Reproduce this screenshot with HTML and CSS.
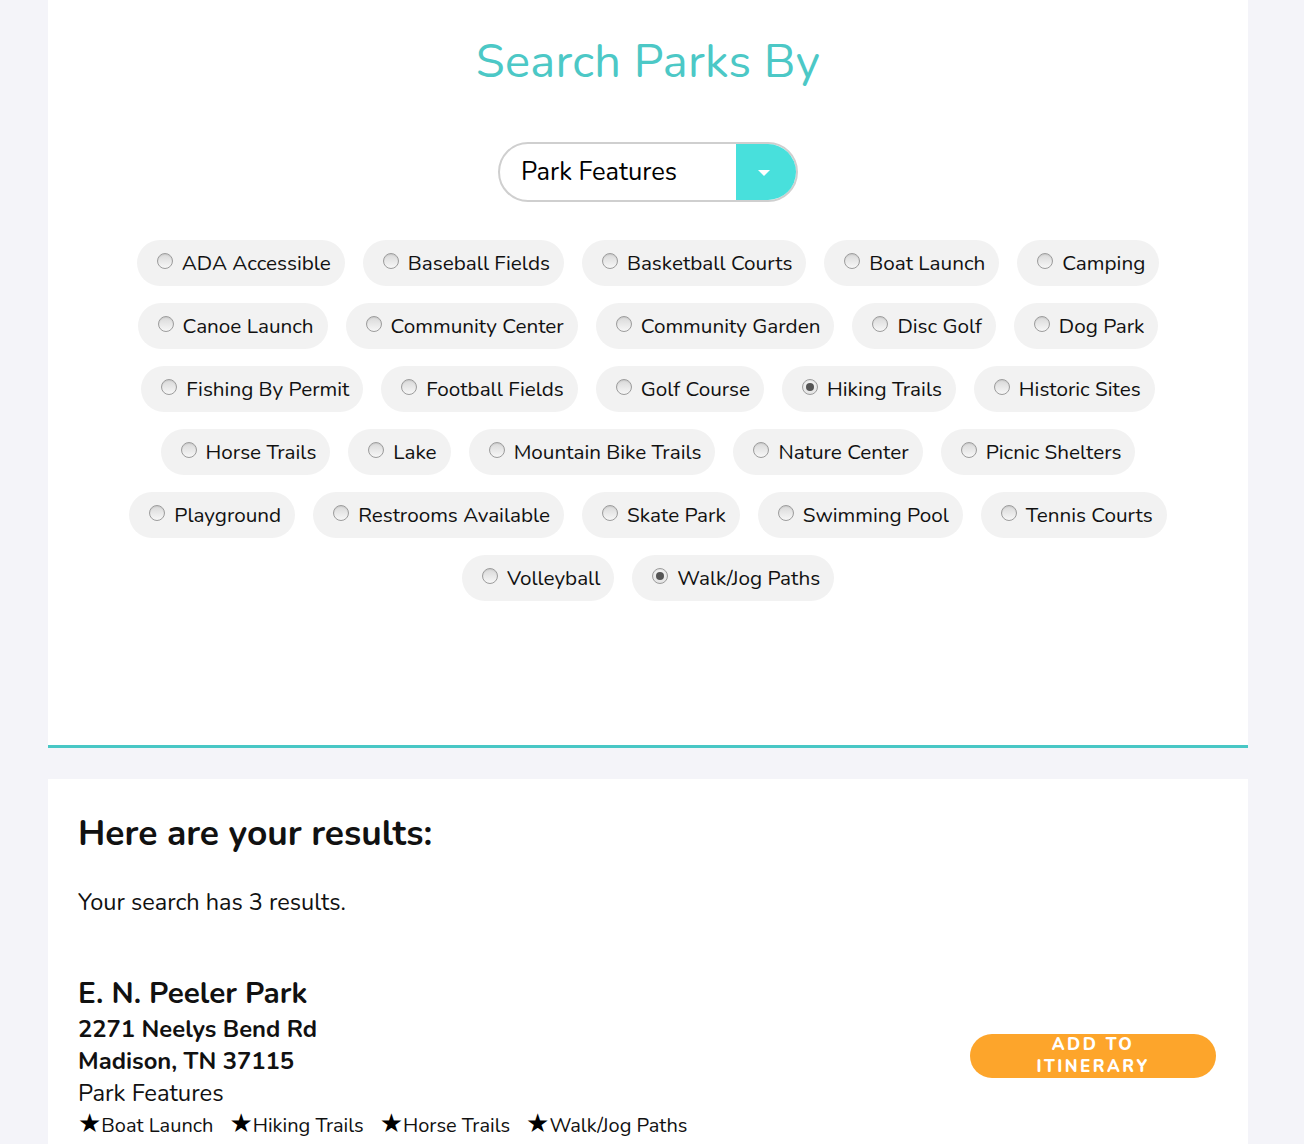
FILE: index.html
```html
<!DOCTYPE html>
<html>
<head>
<meta charset="utf-8">
<link rel="stylesheet" href="styles.css">
</head>
<body>
<div class="page">
  <section class="search">
    <h1 class="title">Search Parks By</h1>
    <div class="select">
      <span class="select-label">Park Features</span>
      <span class="select-btn"><span class="caret"></span></span>
    </div>
    <div class="pills">
      <div class="row">
        <label class="pill"><span class="radio"></span>ADA Accessible</label>
        <label class="pill"><span class="radio"></span>Baseball Fields</label>
        <label class="pill"><span class="radio"></span>Basketball Courts</label>
        <label class="pill"><span class="radio"></span>Boat Launch</label>
        <label class="pill"><span class="radio"></span>Camping</label>
      </div>
      <div class="row">
        <label class="pill"><span class="radio"></span>Canoe Launch</label>
        <label class="pill"><span class="radio"></span>Community Center</label>
        <label class="pill"><span class="radio"></span>Community Garden</label>
        <label class="pill"><span class="radio"></span>Disc Golf</label>
        <label class="pill"><span class="radio"></span>Dog Park</label>
      </div>
      <div class="row">
        <label class="pill"><span class="radio"></span>Fishing By Permit</label>
        <label class="pill"><span class="radio"></span>Football Fields</label>
        <label class="pill"><span class="radio"></span>Golf Course</label>
        <label class="pill"><span class="radio checked"></span>Hiking Trails</label>
        <label class="pill"><span class="radio"></span>Historic Sites</label>
      </div>
      <div class="row">
        <label class="pill"><span class="radio"></span>Horse Trails</label>
        <label class="pill"><span class="radio"></span>Lake</label>
        <label class="pill"><span class="radio"></span>Mountain Bike Trails</label>
        <label class="pill"><span class="radio"></span>Nature Center</label>
        <label class="pill"><span class="radio"></span>Picnic Shelters</label>
      </div>
      <div class="row">
        <label class="pill"><span class="radio"></span>Playground</label>
        <label class="pill"><span class="radio"></span>Restrooms Available</label>
        <label class="pill"><span class="radio"></span>Skate Park</label>
        <label class="pill"><span class="radio"></span>Swimming Pool</label>
        <label class="pill"><span class="radio"></span>Tennis Courts</label>
      </div>
      <div class="row">
        <label class="pill"><span class="radio"></span>Volleyball</label>
        <label class="pill"><span class="radio checked"></span>Walk/Jog Paths</label>
      </div>
    </div>
  </section>
  <section class="results">
    <h2 class="results-title">Here are your results:</h2>
    <p class="count">Your search has 3 results.</p>
    <div class="park">
      <div class="park-info">
        <h3 class="park-name">E. N. Peeler Park</h3>
        <div class="addr">2271 Neelys Bend Rd</div>
        <div class="addr">Madison, TN 37115</div>
        <div class="feat-label">Park Features</div>
        <div class="feats">
          <span class="feat"><span class="star">&#9733;</span>Boat Launch</span>
          <span class="feat"><span class="star">&#9733;</span>Hiking Trails</span>
          <span class="feat"><span class="star">&#9733;</span>Horse Trails</span>
          <span class="feat"><span class="star">&#9733;</span>Walk/Jog Paths</span>
        </div>
      </div>
      <button class="add-btn">Add to<br>Itinerary</button>
    </div>
  </section>
</div>
</body>
</html>
```

FILE: styles.css
```css
* { box-sizing: border-box; }
html, body {
  margin: 0;
  padding: 0;
}
body {
  background: #f4f4f9;
  font-family: "Nunito", "Open Sans", "Noto Sans", sans-serif;
  color: #111;
}
.page {
  width: 1200px;
  margin: 0 0 0 48px;
}
.search {
  background: #fff;
  border-bottom: 3px solid #48c7c5;
  padding: 30px 0 144px;
  display: flex;
  flex-direction: column;
  align-items: center;
}
.title {
  margin: 0;
  font-size: 47px;
  font-weight: 400;
  color: #4cc8c6;
  line-height: 64px;
  letter-spacing: 0.3px;
}
.select {
  margin-top: 48px;
  width: 300px;
  height: 60px;
  border: 2px solid #cfcfcf;
  border-radius: 30px;
  display: flex;
  overflow: hidden;
}
.select-label {
  flex: 1;
  padding-left: 21px;
  font-size: 25.5px;
  line-height: 56px;
  color: #000;
}
.select-btn {
  width: 60px;
  background: #48e0dc;
  display: flex;
  align-items: center;
  justify-content: center;
}
.caret {
  width: 0;
  height: 0;
  border-left: 6px solid transparent;
  border-right: 6px solid transparent;
  border-top: 6px solid #fff;
  margin-left: -4px;
  margin-top: 2px;
}
.pills {
  margin-top: 38px;
  display: flex;
  flex-direction: column;
  gap: 17px;
}
.row {
  display: flex;
  justify-content: center;
  gap: 18px;
}
.pill {
  height: 46px;
  background: #f2f2f2;
  border-radius: 23px;
  display: flex;
  align-items: center;
  padding: 0 14px 0 20px;
  font-size: 20.7px;
  color: #111;
  white-space: nowrap;
}
.radio {
  width: 16px;
  height: 16px;
  border-radius: 50%;
  border: 1px solid #9c9c9c;
  background: linear-gradient(#d9d9d9, #f7f7f7);
  box-shadow: inset 0 1px 1px rgba(0,0,0,0.08);
  margin-right: 9px;
  margin-top: -5px;
  position: relative;
  flex: none;
}
.radio.checked {
  background: linear-gradient(#f4f4f4, #e4e4e4);
}
.radio.checked::after {
  content: "";
  position: absolute;
  left: 3px;
  top: 3px;
  width: 8px;
  height: 8px;
  border-radius: 50%;
  background: #555;
}
.results {
  margin-top: 31px;
  background: #fff;
  padding: 30px 30px 20px;
}
.results-title {
  margin: 0;
  font-size: 35.4px;
  font-weight: 700;
  line-height: 48px;
}
.count {
  margin: 28px 0 0;
  font-size: 23.5px;
  line-height: 34px;
}
.park {
  margin-top: 54px;
  display: flex;
  align-items: center;
  justify-content: space-between;
}
.park-name {
  margin: 0;
  font-size: 29.7px;
  font-weight: 700;
  line-height: 40px;
}
.addr {
  font-size: 23.8px;
  font-weight: 700;
  line-height: 32px;
}
.feat-label {
  font-size: 23.8px;
  line-height: 32px;
}
.feats {
  display: flex;
  gap: 16px;
  font-size: 20px;
  line-height: 34px;
}
.star {
  font-family: "DejaVu Sans", sans-serif;
  font-size: 26px;
  line-height: 1;
  color: #000;
}
.add-btn {
  width: 246px;
  height: 44px;
  margin-right: 2px;
  margin-top: -4px;
  border: none;
  border-radius: 22px;
  background: #fda52b;
  color: #fff;
  font-family: inherit;
  font-weight: 800;
  font-size: 17px;
  line-height: 22px;
  letter-spacing: 2.5px;
  text-transform: uppercase;
  padding: 0;
}
```
